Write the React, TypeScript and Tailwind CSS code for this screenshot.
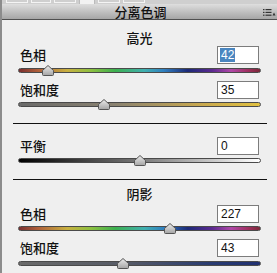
const HUE =
  "linear-gradient(to right, #7a2e2e 0%, #b0603a 8%, #c8b040 20%, #8cc040 30%, #3cb050 40%, #40b0b0 52%, #3080c0 60%, #1c2a78 70%, #5a2a90 80%, #b048a8 88%, #a03060 95%, #7a2838 100%)";

function Thumb({ left }: { left: number }) {
  return (
    <svg
      className="absolute top-[-3px]"
      style={{ left: left - 7 }}
      width="14"
      height="11"
      viewBox="0 0 14 11"
    >
      <defs>
        <linearGradient id="tg" x1="0" y1="0" x2="0" y2="1">
          <stop offset="0" stopColor="#ececec" />
          <stop offset="1" stopColor="#a4a4a4" />
        </linearGradient>
      </defs>
      <path d="M7 0.5 L12.5 5.5 L12.5 9.5 Q12.5 10.5 11.5 10.5 L2.5 10.5 Q1.5 10.5 1.5 9.5 L1.5 5.5 Z" fill="url(#tg)" stroke="#555" strokeWidth="1" />
    </svg>
  );
}

function Slider({ bg, thumb, className }: { bg: string; thumb: number; className: string }) {
  return (
    <div className={`flex items-center ${className}`}>
      <div className="relative ml-[16px] w-[243px] h-[5px]">
        <div className="h-full rounded-full border border-[#4a4a4a]" style={{ background: bg }} />
        <Thumb left={thumb} />
      </div>
    </div>
  );
}

function Row({ label, value, selected, className = "" }: { label: string; value: string; selected?: boolean; className?: string }) {
  return (
    <div className={`flex items-center justify-between h-[18px] pl-[18px] pr-[18px] ${className}`}>
      <span className="text-[13px] leading-[14px] font-medium text-[#111]">{label}</span>
      <div className="w-[42px] h-[18px] bg-white border border-[#7c7c7c] flex items-center pl-[2px] text-[12px] font-['Liberation_Sans',sans-serif] text-[#111]">
        {selected ? <span className="bg-[#4a86c0] text-white leading-[14px] px-[1px]">{value}</span> : <span className="px-[1px]">{value}</span>}
      </div>
    </div>
  );
}

export default function App() {
  return (
    <div className="w-[277px] h-[273px] overflow-hidden bg-[#efefef] border-l-2 border-[#8c8c8c] font-['Noto_Sans_CJK_SC',sans-serif]">
      {/* tab strip */}
      <div className="h-[4px] bg-[#cfcfcf] flex items-start pl-[4px] gap-[3px]">
        <div className="w-[22px] h-[3px] border-x border-b border-[#f4f4f4]" />
        <div className="w-[20px] h-[3px] border-x border-b border-[#f4f4f4]" />
        <div className="w-[22px] h-[3px] border-x border-b border-[#f4f4f4]" />
        <div className="w-[16px] h-[4px] bg-[#f2f2f2] border-x border-[#bbb]" />
        <div className="w-[22px] h-[3px] border-x border-b border-[#f4f4f4]" />
        <div className="w-[22px] h-[3px] border-x border-b border-[#f4f4f4]" />
      </div>
      {/* title bar */}
      <div className="h-[16px] bg-gradient-to-b from-[#dedede] to-[#a6a6a6] border-b border-[#505050] flex items-center relative">
        <span className="flex-1 text-center text-[13px] leading-[14px] font-medium text-[#111] pl-[2px]">分离色调</span>
        <svg className="absolute right-[1px] top-[5px]" width="13" height="7" viewBox="0 0 13 7">
          <rect x="0" y="0" width="1.5" height="1.2" fill="#333" />
          <rect x="0" y="2.8" width="1.5" height="1.2" fill="#333" />
          <rect x="0" y="5.6" width="1.5" height="1.2" fill="#333" />
          <rect x="2.5" y="0" width="6" height="1.2" fill="#333" />
          <rect x="2.5" y="2.8" width="6" height="1.2" fill="#333" />
          <rect x="2.5" y="5.6" width="6" height="1.2" fill="#333" />
          <path d="M9.5 6.5 L12.5 6.5 L11 3.5 Z" fill="#333" />
        </svg>
      </div>

      <div className="h-[26px] pt-[11px] text-center text-[13px] leading-[14px] font-medium text-[#111]">高光</div>
      <Row label="色相" value="42" selected />
      <Slider bg={HUE} thumb={30} className="h-[12px]" />
      <Row label="饱和度" value="35" className="mt-[5px]" />
      <Slider bg="linear-gradient(to right, #6a6a6a, #8a8270 40%, #c8a850 75%, #e0c040)" thumb={86} className="h-[10px]" />

      <div className="mt-[14px] ml-[11px] w-[254px] h-px bg-[#111]" />

      <Row label="平衡" value="0" className="mt-[13px]" />
      <Slider bg="linear-gradient(to right, #000, #777 50%, #fff)" thumb={122} className="h-[10px]" />

      <div className="mt-[14px] ml-[11px] w-[254px] h-px bg-[#111]" />

      <div className="h-[25px] pt-[7px] text-center text-[13px] leading-[14px] font-medium text-[#111]">阴影</div>
      <Row label="色相" value="227" />
      <Slider bg={HUE} thumb={152} className="h-[10px]" />
      <Row label="饱和度" value="43" className="mt-[6px]" />
      <Slider bg="linear-gradient(to right, #6a6a6a, #555a66 45%, #283a70 80%, #203070)" thumb={105} className="h-[12px]" />
    </div>
  );
}
